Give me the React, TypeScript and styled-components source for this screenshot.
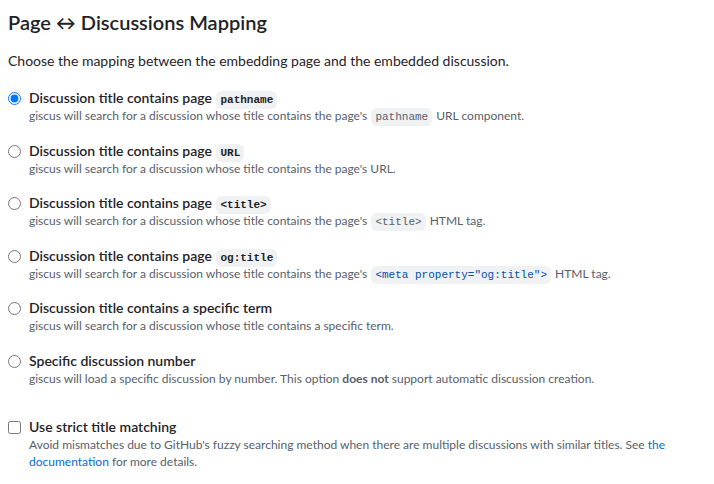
import React from "react";
import styled, { createGlobalStyle } from "styled-components";

const Global = createGlobalStyle`
  html, body { margin: 0; padding: 0; background: #ffffff; }
  body { font-family: "Segoe UI", Lato, "Noto Sans", sans-serif; color: #1f2328; }
`;

const Page = styled.div`
  padding: 9px 8px 8px 8px;
  width: 698px;
`;

const Heading = styled.h2`
  margin: 0;
  font-size: 20px;
  line-height: 26px;
  font-weight: 600;
  color: #1f2328;
`;

const Intro = styled.p`
  margin: 16px 0 18px 0;
  font-size: 14px;
  line-height: 20px;
  color: #1f2328;
`;

const Options = styled.div`
  display: flex;
  flex-direction: column;
  gap: 17.5px;
`;

const Option = styled.label<{ $extraTop?: boolean }>`
  display: flex;
  align-items: flex-start;
  gap: 8px;
  margin-top: ${(p) => (p.$extraTop ? "13.5px" : "0")};
`;

const Radio = styled.input`
  width: 13px;
  height: 13px;
  margin: 3px 0 0 0;
  flex: none;
`;

const Body = styled.div`
  display: flex;
  flex-direction: column;
`;

const Label = styled.span`
  font-size: 14px;
  line-height: 18px;
  font-weight: 600;
  color: #1f2328;
`;

const Desc = styled.span`
  font-size: 12px;
  line-height: 17px;
  color: #57606a;
`;

const Code = styled.code<{ $blue?: boolean }>`
  font-family: "Liberation Mono", "DejaVu Sans Mono", monospace;
  font-size: 11px;
  line-height: 1;
  padding: 3px 4px;
  margin: 0 1px;
  border-radius: 6px;
  background: #eff1f3;
  color: ${(p) => (p.$blue ? "#0550ae" : "inherit")};
`;

const Link = styled.a`
  color: #0969da;
  text-decoration: none;
`;

type Opt = { label: React.ReactNode; desc: React.ReactNode; checked?: boolean };

const opts: Opt[] = [
  {
    label: <>Discussion title contains page <Code>pathname</Code></>,
    desc: <>giscus will search for a discussion whose title contains the page's <Code>pathname</Code> URL component.</>,
    checked: true,
  },
  {
    label: <>Discussion title contains page <Code>URL</Code></>,
    desc: <>giscus will search for a discussion whose title contains the page's URL.</>,
  },
  {
    label: <>Discussion title contains page <Code>&lt;title&gt;</Code></>,
    desc: <>giscus will search for a discussion whose title contains the page's <Code>&lt;title&gt;</Code> HTML tag.</>,
  },
  {
    label: <>Discussion title contains page <Code>og:title</Code></>,
    desc: <>giscus will search for a discussion whose title contains the page's <Code $blue>&lt;meta property="og:title"&gt;</Code> HTML tag.</>,
  },
  {
    label: <>Discussion title contains a specific term</>,
    desc: <>giscus will search for a discussion whose title contains a specific term.</>,
  },
  {
    label: <>Specific discussion number</>,
    desc: <>giscus will load a specific discussion by number. This option <strong>does not</strong> support automatic discussion creation.</>,
  },
];

export default function App() {
  return (
    <Page>
      <Global />
      <Heading>Page ↔ Discussions Mapping</Heading>
      <Intro>Choose the mapping between the embedding page and the embedded discussion.</Intro>
      <Options>
        {opts.map((o, i) => (
          <Option key={i}>
            <Radio type="radio" name="mapping" defaultChecked={o.checked} />
            <Body>
              <Label>{o.label}</Label>
              <Desc>{o.desc}</Desc>
            </Body>
          </Option>
        ))}
        <Option $extraTop>
          <Radio type="checkbox" />
          <Body>
            <Label>Use strict title matching</Label>
            <Desc>
              Avoid mismatches due to GitHub's fuzzy searching method when there are multiple discussions with similar titles. See{" "}
              <Link href="#">the documentation</Link> for more details.
            </Desc>
          </Body>
        </Option>
      </Options>
    </Page>
  );
}
